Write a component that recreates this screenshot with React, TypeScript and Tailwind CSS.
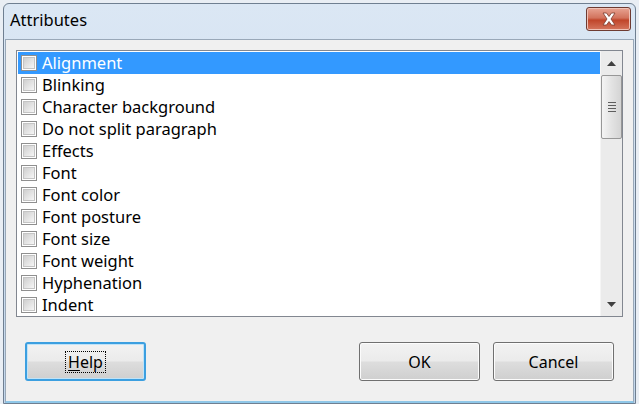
import React from 'react';

const items = [
  'Alignment',
  'Blinking',
  'Character background',
  'Do not split paragraph',
  'Effects',
  'Font',
  'Font color',
  'Font posture',
  'Font size',
  'Font weight',
  'Hyphenation',
  'Indent',
];

const font = { fontFamily: '"Noto Sans", "Open Sans", sans-serif' };

const CheckBox: React.FC = () => (
  <span className="w-[16px] h-[16px] shrink-0 border border-[#8f8f8f] bg-white p-[1px]">
    <span className="block w-full h-full bg-gradient-to-br from-[#cfcfcf] to-[#f6f6f6] border border-[#c4c4c4]"></span>
  </span>
);

const Button: React.FC<{ label: React.ReactNode; focused?: boolean; className?: string }> = ({ label, focused, className }) => (
  <div
    className={`h-[39px] w-[121px] rounded-[3px] flex items-center justify-center text-[16px] text-black ${
      focused ? 'border-2 border-[#3c9fe0] shadow-[inset_0_0_0_1px_#bfe3f8]' : 'border border-[#707070] shadow-[inset_0_0_0_1px_#fcfcfc]'
    } bg-[linear-gradient(#f2f2f2_0%,#ebebeb_48%,#dddddd_52%,#cfcfcf_100%)] ${className || ''}`}
  >
    {label}
  </div>
);

export default function App() {
  return (
    <div className="w-[639px] h-[404px] bg-[#e9eef4] overflow-hidden" style={font}>
      <div className="ml-[3px] mt-[3px] w-[633px] h-[401px] border border-[#6f7f91] rounded-t-[6px] bg-[linear-gradient(#dbe7f4,#c3d7ec)] flex flex-col">
        {/* Title bar */}
        <div className="h-[35px] flex items-center justify-between pl-[6px] pr-[4px] shrink-0">
          <span className="text-[16.5px] text-black -mt-[2px]">Attributes</span>
          <div className="w-[45px] h-[24px] -mt-[6px] rounded-[3px] border border-[#6e3b32] bg-[linear-gradient(#e8a493_0%,#d2735d_45%,#c0452a_55%,#d5765e_100%)] flex items-center justify-center shadow-[inset_0_0_0_1px_#f0c2b6]">
            <svg width="16" height="14" viewBox="0 0 16 14">
              <path d="M2 1 L5.5 1 L8 4.5 L10.5 1 L14 1 L10 7 L14 13 L10.5 13 L8 9.5 L5.5 13 L2 13 L6 7 Z" fill="#ffffff" stroke="#7a3a2c" strokeWidth="0.8" />
            </svg>
          </div>
        </div>
        {/* Client area */}
        <div className="flex-1 mx-[1px] bg-[#f0f0f0] border-t border-[#99a8b8] border-x border-b-2 border-b-[#8fc7e8] flex flex-col">
          <div className="mt-[10px] ml-[10px] w-[607px] h-[267px] border border-[#828790] bg-white flex p-[1px]">
            <div className="flex-1 flex flex-col overflow-hidden">
              {items.map((t, i) => (
                <div
                  key={t}
                  className={`h-[22px] shrink-0 flex items-center gap-[5px] pl-[3px] text-[16.5px] ${
                    i === 0 ? 'bg-[#3399ff] text-white' : 'text-black'
                  }`}
                >
                  <CheckBox />
                  <span className="leading-[22px]">{t}</span>
                </div>
              ))}
            </div>
            {/* Scrollbar */}
            <div className="w-[22px] -mt-[1px] -mb-[1px] -mr-[1px] bg-[#ebebeb] flex flex-col items-center border-l border-[#f5f5f5]">
              <div className="h-[24px] w-full flex items-center justify-center">
                <svg width="9" height="5" viewBox="0 0 9 5"><path d="M0 5 L4.5 0 L9 5 Z" fill="#404040" /></svg>
              </div>
              <div className="w-[21px] h-[64px] rounded-[2px] border border-[#979797] bg-[linear-gradient(90deg,#f4f4f4,#e3e3e3_50%,#d4d4d4)] flex flex-col items-center justify-center gap-[2px]">
                <span className="block w-[8px] h-[1px] bg-[#5e5e5e]"></span>
                <span className="block w-[8px] h-[1px] bg-[#5e5e5e]"></span>
                <span className="block w-[8px] h-[1px] bg-[#5e5e5e]"></span>
                <span className="block w-[8px] h-[1px] bg-[#5e5e5e]"></span>
              </div>
              <div className="flex-1"></div>
              <div className="h-[24px] w-full flex items-center justify-center">
                <svg width="9" height="5" viewBox="0 0 9 5"><path d="M0 0 L9 0 L4.5 5 Z" fill="#404040" /></svg>
              </div>
            </div>
          </div>
          <div className="mt-[25px] flex items-center pl-[19px] pr-[19px]">
            <Button
              focused
              label={
                <span className="border border-dotted border-black px-[2px] leading-[20px]">
                  <span className="underline underline-offset-2">H</span>elp
                </span>
              }
            />
            <div className="flex-1"></div>
            <Button label="OK" />
            <Button label="Cancel" className="ml-[13px]" />
          </div>
        </div>
      </div>
    </div>
  );
}
